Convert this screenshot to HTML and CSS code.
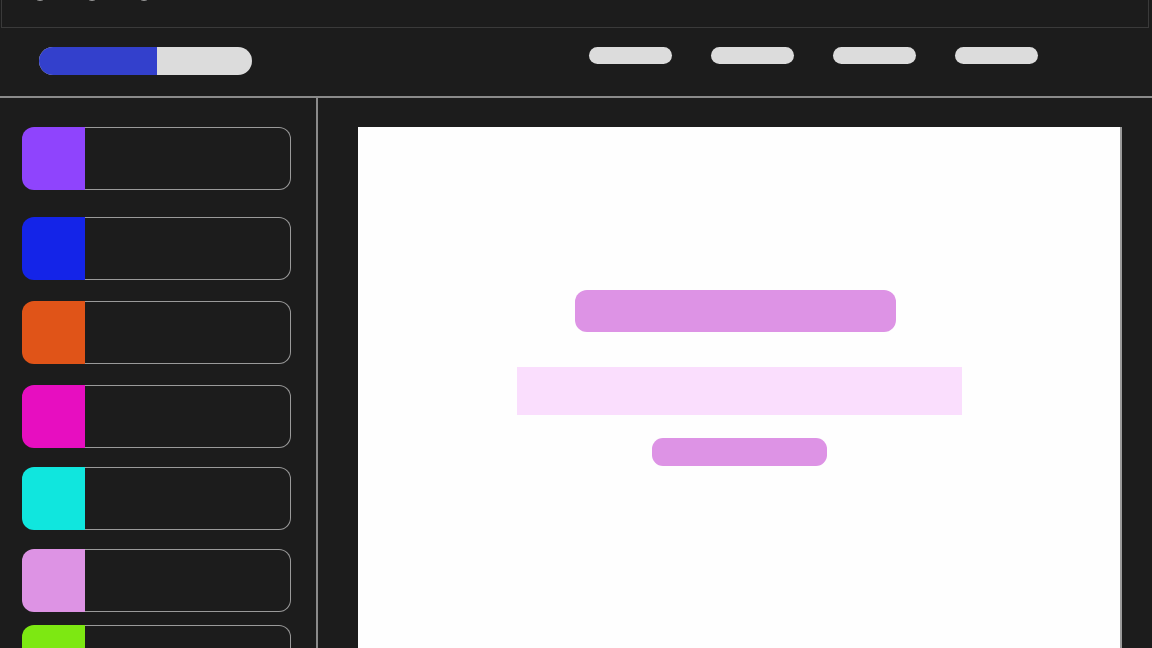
FILE: index.html
```html
<!DOCTYPE html>
<html lang="en">
<head>
    <meta charset="UTF-8">
    <meta name="viewport" content="width=device-width, initial-scale=1.0">
    <title>Theme Builder</title>
    <link rel="stylesheet" href="styles.css">
</head>
<body>
    <div class="titlebar">
        <span class="dot"></span>
        <span class="dot"></span>
        <span class="dot"></span>
    </div>

    <div class="header">
        <div class="progress">
            <div class="progress-fill" style="width: 118px"></div>
        </div>
        <div class="nav">
            <span class="nav-pill"></span>
            <span class="nav-pill"></span>
            <span class="nav-pill"></span>
            <span class="nav-pill"></span>
        </div>
    </div>

    <div class="workspace">
        <div class="sidebar">
            <div class="swatch-item"><span class="swatch purple"></span><span class="swatch-body"></span></div>
            <div class="swatch-item"><span class="swatch blue"></span><span class="swatch-body"></span></div>
            <div class="swatch-item"><span class="swatch orange"></span><span class="swatch-body"></span></div>
            <div class="swatch-item"><span class="swatch magenta"></span><span class="swatch-body"></span></div>
            <div class="swatch-item"><span class="swatch cyan"></span><span class="swatch-body"></span></div>
            <div class="swatch-item"><span class="swatch pink"></span><span class="swatch-body"></span></div>
            <div class="swatch-item"><span class="swatch green"></span><span class="swatch-body"></span></div>
        </div>

        <div class="main">
            <div class="canvas">
                <div class="block-title"></div>
                <div class="block-band"></div>
                <div class="block-button"></div>
            </div>
        </div>
    </div>
</body>
</html>
```

FILE: styles.css
```css
* {
    box-sizing: border-box;
    margin: 0;
    padding: 0;
}

html, body {
    height: 100%;
    overflow: hidden;
}

body {
    font-family: "Liberation Sans", Arial, sans-serif;
    background-color: #1c1c1c;
}

.titlebar {
    height: 28px;
    margin: 0 3px 0 1px;
    border: 1px solid #3a3a3a;
    border-top: none;
    display: flex;
    gap: 38px;
    padding-left: 31px;
}

.dot {
    width: 14px;
    height: 14px;
    margin-top: -13px;
    border-radius: 50%;
    border: 1.5px solid #9a9a9a;
}

.header {
    height: 70px;
    display: flex;
    justify-content: space-between;
    align-items: flex-start;
    padding: 19px 114px 0 39px;
    border-bottom: 2px solid #8a8a8a;
}

.progress {
    width: 213px;
    height: 28px;
    border-radius: 14px;
    background: #dcdcdc;
    overflow: hidden;
}

.progress-fill {
    height: 100%;
    background: #3340cc;
}

.nav {
    display: flex;
    gap: 39px;
}

.nav-pill {
    width: 83px;
    height: 17px;
    border-radius: 9px;
    background: #dcdcdc;
}

.workspace {
    display: flex;
    min-height: 560px;
}

.sidebar {
    width: 318px;
    flex-shrink: 0;
    border-right: 2px solid #8a8a8a;
    padding: 29px 0 0 22px;
}

.swatch-item {
    width: 269px;
    height: 63px;
    display: flex;
}

.swatch-item + .swatch-item {
    margin-top: 21px;
}

.swatch-item:nth-child(2) {
    margin-top: 27px;
}

.swatch-item:nth-child(5),
.swatch-item:nth-child(6) {
    margin-top: 19px;
}

.swatch-item:nth-child(7) {
    margin-top: 13px;
}

.swatch {
    width: 63px;
    border-radius: 12px 0 0 12px;
}

.swatch-body {
    flex: 1;
    border: 1.5px solid #9a9a9a;
    border-left: none;
    border-radius: 0 12px 12px 0;
}

.purple { background: #8f44fd; }
.blue { background: #1424e8; }
.orange { background: #e05418; }
.magenta { background: #e70ec0; }
.cyan { background: #10e6de; }
.pink { background: #dd93e4; }
.green { background: #7de812; }

.main {
    flex: 1;
    padding: 29px 30px 0 40px;
}

.canvas {
    height: 580px;
    background: #fefefe;
    border-right: 2px solid #9a9a9a;
    display: flex;
    flex-direction: column;
    align-items: center;
    padding-top: 163px;
}

.block-title {
    width: 321px;
    height: 42px;
    border-radius: 12px;
    background: #dd93e5;
    margin-left: -8px;
}

.block-band {
    width: 445px;
    height: 48px;
    background: #fadefd;
    margin-top: 35px;
}

.block-button {
    width: 175px;
    height: 28px;
    border-radius: 11px;
    background: #dd93e5;
    margin-top: 23px;
}
```
